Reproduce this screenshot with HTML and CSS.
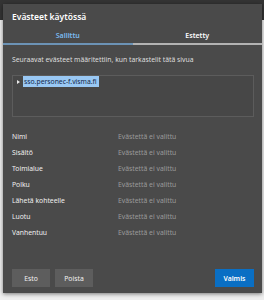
FILE: index.html
```html
<!DOCTYPE html>
<html lang="fi">
<head>
    <meta charset="UTF-8">
    <meta name="viewport" content="width=device-width, initial-scale=1.0">
    <title>Evästeet käytössä</title>
    <link rel="stylesheet" href="styles.css">
</head>
<body>
    <div class="cookie-dialog">
        <div class="dialog-header">
            <h1>Evästeet käytössä</h1>
        </div>

        <div class="tabs">
            <div class="tab active">Sallittu</div>
            <div class="tab">Estetty</div>
        </div>

        <p class="description">Seuraavat evästeet määritettiin, kun tarkastelit tätä sivua</p>

        <div class="site-tree">
            <div class="tree-item">
                <span class="expander"></span>
                <span class="site-name">sso.personec-f.visma.fi</span>
            </div>
        </div>

        <div class="cookie-details">
            <div class="detail-row"><span class="detail-label">Nimi</span><span class="detail-value">Evästettä ei valittu</span></div>
            <div class="detail-row"><span class="detail-label">Sisältö</span><span class="detail-value">Evästettä ei valittu</span></div>
            <div class="detail-row"><span class="detail-label">Toimialue</span><span class="detail-value">Evästettä ei valittu</span></div>
            <div class="detail-row"><span class="detail-label">Polku</span><span class="detail-value">Evästettä ei valittu</span></div>
            <div class="detail-row"><span class="detail-label">Lähetä kohteelle</span><span class="detail-value">Evästettä ei valittu</span></div>
            <div class="detail-row"><span class="detail-label">Luotu</span><span class="detail-value">Evästettä ei valittu</span></div>
            <div class="detail-row"><span class="detail-label">Vanhentuu</span><span class="detail-value">Evästettä ei valittu</span></div>
        </div>

        <div class="dialog-actions">
            <button class="btn">Esto</button>
            <button class="btn">Poista</button>
            <button class="btn btn-primary">Valmis</button>
        </div>
    </div>
</body>
</html>
```

FILE: styles.css
```css
* {
    margin: 0;
    padding: 0;
    box-sizing: border-box;
    font-family: "Noto Sans", "Open Sans", Arial, sans-serif;
}

body {
    background: linear-gradient(#343434 0 20px, #efefef 20px);
    height: 300px;
    overflow: hidden;
}

.cookie-dialog {
    background: #4a4a4a;
    margin: 4px 0 0 3px;
    width: 259px;
    height: 289px;
    box-shadow: 0 1px 4px rgba(0, 0, 0, 0.5);
    color: #f2f2f2;
    display: flex;
    flex-direction: column;
}

.dialog-header {
    height: 24px;
    display: flex;
    align-items: center;
    padding-left: 9px;
}

h1 {
    font-size: 8.5px;
    font-weight: 600;
    color: #fff;
}

.tabs {
    display: flex;
}

.tab {
    flex: 1;
    height: 17px;
    display: flex;
    align-items: center;
    justify-content: center;
    font-size: 7px;
    font-weight: 600;
    color: #fff;
    border-bottom: 2px solid #b3b3b3;
}

.tab.active {
    color: #7cbcf2;
    border-bottom-color: #6c93b6;
}

.description {
    margin: 7px 0 0 9px;
    line-height: 16px;
    font-size: 6.8px;
    color: #dedede;
}

.site-tree {
    margin: 7px 8px 0 9px;
    height: 42px;
    border: 1px solid #5c5c5c;
    background: #474747;
}

.tree-item {
    display: flex;
    align-items: center;
    height: 11px;
}

.expander {
    width: 0;
    height: 0;
    margin: 0 3px 0 4px;
    border-left: 3px solid #e8e8e8;
    border-top: 2px solid transparent;
    border-bottom: 2px solid transparent;
}

.site-name {
    background: #99c8f4;
    color: #14284a;
    font-size: 6.8px;
    line-height: 11px;
    padding: 0 2px 0 1px;
    white-space: nowrap;
}

.cookie-details {
    margin: 11px 0 0 9px;
}

.detail-row {
    display: flex;
    align-items: center;
    height: 16px;
    font-size: 6.8px;
}

.detail-label {
    width: 106px;
    color: #f0f0f0;
}

.detail-value {
    color: #9a9a9a;
}

.dialog-actions {
    display: flex;
    gap: 5px;
    margin: 29px 8px 0 9px;
}

.btn {
    height: 18px;
    width: 38px;
    border: none;
    background: #5d5d5d;
    color: #f2f2f2;
    font-size: 6.8px;
}

.btn-primary {
    margin-left: auto;
    width: 39px;
    background: #0a6fc4;
    color: #fff;
    font-weight: 600;
}
```
